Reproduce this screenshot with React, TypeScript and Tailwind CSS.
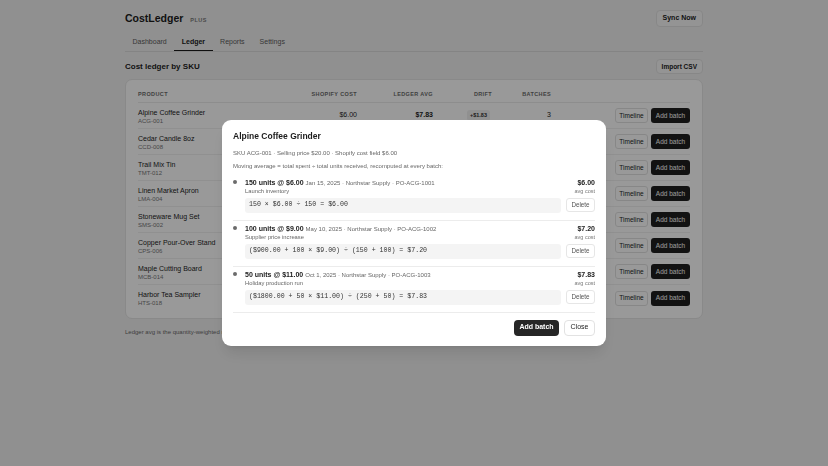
import React from "react";

type Row = {
  name: string;
  sku: string;
  shopify: string;
  ledger: string;
  drift: string;
  batches: number;
};

type Batch = {
  units: number;
  price: string;
  meta: string;
  note: string;
  formula: string;
  avg: string;
};

const rows: Row[] = [
  { name: "Alpine Coffee Grinder", sku: "ACG-001", shopify: "$6.00", ledger: "$7.83", drift: "+$1.83", batches: 3 },
  { name: "Cedar Candle 8oz", sku: "CCD-008", shopify: "$4.10", ledger: "$4.25", drift: "+$0.15", batches: 2 },
  { name: "Trail Mix Tin", sku: "TMT-012", shopify: "$2.40", ledger: "$2.40", drift: "$0.00", batches: 1 },
  { name: "Linen Market Apron", sku: "LMA-004", shopify: "$9.50", ledger: "$9.12", drift: "-$0.38", batches: 2 },
  { name: "Stoneware Mug Set", sku: "SMS-002", shopify: "$12.00", ledger: "$12.60", drift: "+$0.60", batches: 4 },
  { name: "Copper Pour-Over Stand", sku: "CPS-006", shopify: "$15.00", ledger: "$14.20", drift: "-$0.80", batches: 2 },
  { name: "Maple Cutting Board", sku: "MCB-014", shopify: "$7.75", ledger: "$8.05", drift: "+$0.30", batches: 3 },
  { name: "Harbor Tea Sampler", sku: "HTS-018", shopify: "$5.20", ledger: "$5.20", drift: "$0.00", batches: 1 },
];

const batches: Batch[] = [
  {
    units: 150,
    price: "$6.00",
    meta: "Jan 15, 2025 · Northstar Supply · PO-ACG-1001",
    note: "Launch inventory",
    formula: "150 × $6.00 ÷ 150 = $6.00",
    avg: "$6.00",
  },
  {
    units: 100,
    price: "$9.00",
    meta: "May 10, 2025 · Northstar Supply · PO-ACG-1002",
    note: "Supplier price increase",
    formula: "($900.00 + 100 × $9.00) ÷ (150 + 100) = $7.20",
    avg: "$7.20",
  },
  {
    units: 50,
    price: "$11.00",
    meta: "Oct 1, 2025 · Northstar Supply · PO-ACG-1003",
    note: "Holiday production run",
    formula: "($1800.00 + 50 × $11.00) ÷ (250 + 50) = $7.83",
    avg: "$7.83",
  },
];

const tabs = ["Dashboard", "Ledger", "Reports", "Settings"];

export default function App() {
  return (
    <div className="min-h-[466px] bg-[#f0f0f0] text-[#1c1c1c] font-['Liberation_Sans',Arial,sans-serif]">
      <div className="mx-auto w-[578px] pt-[10px]">
        {/* header */}
        <div className="flex items-center justify-between h-[17px]">
          <div className="flex items-baseline gap-[7px]">
            <span className="text-[10.5px] font-bold leading-none">CostLedger</span>
            <span className="text-[5.5px] tracking-[0.08em] text-[#7a7a7a] font-semibold">PLUS</span>
          </div>
          <button className="h-[17px] px-[6px] rounded-[4px] border border-[#e2e2e2] bg-[#f7f7f7] text-[7px] font-semibold">
            Sync Now
          </button>
        </div>

        {/* tabs */}
        <div className="mt-[7px] flex border-b border-[#dcdcdc]">
          {tabs.map((t) => (
            <div
              key={t}
              className={
                t === "Ledger"
                  ? "h-[17px] pt-[1px] px-[7.5px] flex items-center text-[7px] font-semibold border-b-[1.5px] border-[#1c1c1c]"
                  : "h-[17px] pt-[1px] px-[7.5px] flex items-center text-[7px] text-[#5c5c5c] border-b-[1.5px] border-transparent"
              }
            >
              {t}
            </div>
          ))}
        </div>

        {/* section title */}
        <div className="mt-[7px] flex items-center justify-between h-[15px]">
          <h2 className="pt-[1px] text-[8px] font-bold">Cost ledger by SKU</h2>
          <button className="h-[15px] px-[5px] rounded-[4px] border border-[#e2e2e2] bg-[#f7f7f7] text-[6.5px] font-semibold">
            Import CSV
          </button>
        </div>

        {/* table card */}
        <div className="mt-[5px] bg-white border border-[#e4e4e4] rounded-[7px] px-[12px] pt-[7px] pb-[7px]">
          <div className="grid grid-cols-[1fr_72px_76px_59px_59px_139px] h-[16px] items-center border-b border-[#ececec] text-[5.5px] font-semibold tracking-[0.07em] text-[#6b6b6b] uppercase">
            <div>Product</div>
            <div className="text-right">Shopify cost</div>
            <div className="text-right">Ledger avg</div>
            <div className="text-right">Drift</div>
            <div className="text-right">Batches</div>
            <div />
          </div>
          {rows.map((r, i) => (
            <div
              key={r.sku}
              className={
                "grid grid-cols-[1fr_72px_76px_59px_59px_139px] h-[26px] items-center " +
                (i < rows.length - 1 ? "border-b border-[#f0f0f0]" : "")
              }
            >
              <div className="flex flex-col pt-[2px]">
                <span className="text-[7px] leading-[9px]">{r.name}</span>
                <span className="text-[6px] leading-[9px] text-[#777]">{r.sku}</span>
              </div>
              <div className="text-right text-[7px]">{r.shopify}</div>
              <div className="text-right text-[7px] font-bold">{r.ledger}</div>
              <div className="flex justify-end pr-[2px]">
                <span className="px-[3px] py-[1px] rounded-[3px] bg-[#f1f1f1] text-[5.5px] font-semibold text-[#333]">
                  {r.drift}
                </span>
              </div>
              <div className="text-right text-[7px]">{r.batches}</div>
              <div className="flex justify-end gap-[3px]">
                <button className="h-[15px] w-[33px] rounded-[3px] border border-[#e2e2e2] bg-white text-[6.5px] font-medium">
                  Timeline
                </button>
                <button className="h-[15px] w-[39px] rounded-[3px] bg-[#1f1f1f] text-white text-[6.5px] font-medium">
                  Add batch
                </button>
              </div>
            </div>
          ))}
        </div>

        <p className="mt-[9px] text-[6px] text-[#6b6b6b]">
          Ledger avg is the quantity-weighted moving average of every received batch. Drift compares it with the Shopify cost field.
        </p>
      </div>

      {/* overlay + modal */}
      <div className="fixed inset-0 bg-black/40 flex items-center justify-center">
        <div className="w-[384px] bg-white rounded-[9px] shadow-lg px-[11px] pt-[11px] pb-[10.5px]">
          <h3 className="text-[8.5px] leading-[11px] font-bold">Alpine Coffee Grinder</h3>
          <p className="mt-[7px] text-[6px] leading-[8px] text-[#666]">
            SKU ACG-001 · Selling price $20.00 · Shopify cost field $6.00
          </p>
          <p className="mt-[5px] text-[6px] leading-[8px] text-[#666]">
            Moving average = total spent ÷ total units received, recomputed at every batch:
          </p>

          <div className="mt-[7.5px]">
            {batches.map((b, i) => (
              <div
                key={b.units}
                className={"flex gap-[8px] border-b border-[#ececec] pb-[7px] " + (i > 0 ? "pt-[3px]" : "")}
              >
                <div className="mt-[2.5px] w-[4px] h-[4px] rounded-full bg-[#6b6b6b] shrink-0" />
                <div className="flex-1">
                  <div className="flex justify-between">
                    <div>
                      <div className="h-[9px] flex items-baseline gap-[2px] text-[7px] leading-[9px] whitespace-nowrap">
                        <span className="font-bold">
                          {b.units} units @ {b.price}
                        </span>
                        <span className="text-[6px] text-[#666]">{b.meta}</span>
                      </div>
                      <div className="text-[5.8px] leading-[9px] text-[#666]">{b.note}</div>
                    </div>
                    <div className="text-right">
                      <div className="text-[7px] leading-[9px] font-bold">{b.avg}</div>
                      <div className="text-[5.5px] leading-[9px] text-[#777]">avg cost</div>
                    </div>
                  </div>
                  <div className="mt-[2px] flex items-center gap-[5px]">
                    <div className="flex-1 h-[15px] rounded-[3px] bg-[#f4f4f4] px-[4px] flex items-center font-['Liberation_Mono',monospace] text-[6.6px] text-[#333]">
                      {b.formula}
                    </div>
                    <button className="h-[14px] w-[29px] rounded-[3px] border border-[#e6e6e6] bg-white text-[6.3px] text-[#555]">
                      Delete
                    </button>
                  </div>
                </div>
              </div>
            ))}
          </div>

          <div className="mt-[7px] flex justify-end gap-[5px]">
            <button className="h-[16px] w-[45px] rounded-[4px] bg-[#262626] text-white text-[7px] font-semibold">
              Add batch
            </button>
            <button className="h-[16px] w-[31px] rounded-[4px] border border-[#e2e2e2] bg-white text-[7px] font-medium">
              Close
            </button>
          </div>
        </div>
      </div>
    </div>
  );
}
